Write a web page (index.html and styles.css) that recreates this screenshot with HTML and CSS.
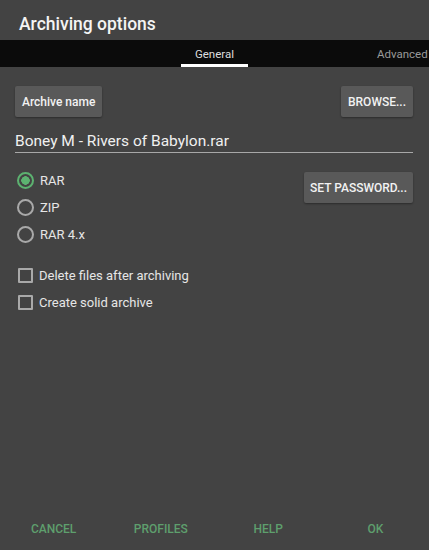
FILE: index.html
```html
<!DOCTYPE html>
<html>
<head>
  <link rel="stylesheet" href="styles.css">
</head>
<body>
  <div class="dialog">
    <h1 class="title">Archiving options</h1>

    <div class="tabs">
      <span class="tab active">General</span>
      <span class="tab next">Advanced</span>
    </div>

    <div class="content">
      <div class="row">
        <button class="btn">Archive name</button>
        <button class="btn">BROWSE...</button>
      </div>

      <div class="field">Boney M - Rivers of Babylon.rar</div>

      <div class="options">
        <div class="formats">
          <label class="choice"><span class="radio checked"></span>RAR</label>
          <label class="choice"><span class="radio"></span>ZIP</label>
          <label class="choice"><span class="radio"></span>RAR 4.x</label>
        </div>
        <button class="btn password">SET PASSWORD...</button>
      </div>

      <div class="checks">
        <label class="choice"><span class="box"></span>Delete files after archiving</label>
        <label class="choice"><span class="box"></span>Create solid archive</label>
      </div>
    </div>

    <div class="footer">
      <span>CANCEL</span>
      <span>PROFILES</span>
      <span>HELP</span>
      <span>OK</span>
    </div>
  </div>
</body>
</html>
```

FILE: styles.css
```css
body {
  margin: 0;
  background-color: #434343;
  font-family: Roboto, "Liberation Sans", sans-serif;
}
.dialog {
  display: flex;
  flex-direction: column;
  height: 550px;
  overflow: hidden;
}
.title {
  margin: 0;
  height: 36px;
  padding: 4px 0 0 19px;
  line-height: 40px;
  font-size: 17.5px;
  font-weight: 500;
  color: #f4f4f4;
}
.tabs {
  display: flex;
  height: 27px;
  background-color: #0b0b0b;
  white-space: nowrap;
  overflow: hidden;
}
.tab {
  font-size: 11.5px;
  line-height: 29px;
  text-align: center;
}
.tab.active {
  margin-left: 181px;
  width: 67px;
  color: #dedede;
  box-shadow: inset 0 -3px 0 #ffffff;
}
.tab.next {
  margin-left: 129px;
  color: #9a9a9a;
}
.content {
  flex: 1;
  padding: 0 16px 0 15px;
}
.row {
  display: flex;
  justify-content: space-between;
  margin-top: 19px;
}
.btn {
  height: 31px;
  padding: 0 7px;
  border: none;
  border-radius: 2px;
  background-color: #595959;
  box-shadow: 0 1px 2px rgba(0, 0, 0, 0.35);
  color: #f2f2f2;
  font-family: inherit;
  font-size: 12px;
  font-weight: 500;
}
.field {
  margin-top: 14px;
  line-height: 20px;
  padding-bottom: 1px;
  border-bottom: 1.5px solid #a8a8a8;
  font-size: 15.5px;
  color: #f0f0f0;
}
.options {
  display: flex;
  justify-content: space-between;
  align-items: flex-start;
  margin-top: 14px;
}
.password {
  margin-top: 5px;
  padding: 0 6px;
}
.choice {
  display: flex;
  align-items: center;
  height: 27px;
  font-size: 13px;
  color: #e6e6e6;
}
.radio {
  box-sizing: border-box;
  width: 17px;
  height: 17px;
  margin: 0 6px 0 2px;
  border: 2px solid #a9a9a9;
  border-radius: 50%;
}
.radio.checked {
  border-color: #5cb270;
  background: radial-gradient(circle, #5cb270 4px, transparent 4.5px);
}
.checks {
  margin-top: 14px;
}
.box {
  box-sizing: border-box;
  width: 15px;
  height: 15px;
  margin: 0 6px 0 3px;
  border: 2px solid #a9a9a9;
  border-radius: 1px;
}
.footer {
  display: grid;
  grid-template-columns: repeat(4, 1fr);
  height: 42px;
  line-height: 43px;
  text-align: center;
  font-size: 12px;
  font-weight: 500;
  color: #5e9f6d;
}
```
